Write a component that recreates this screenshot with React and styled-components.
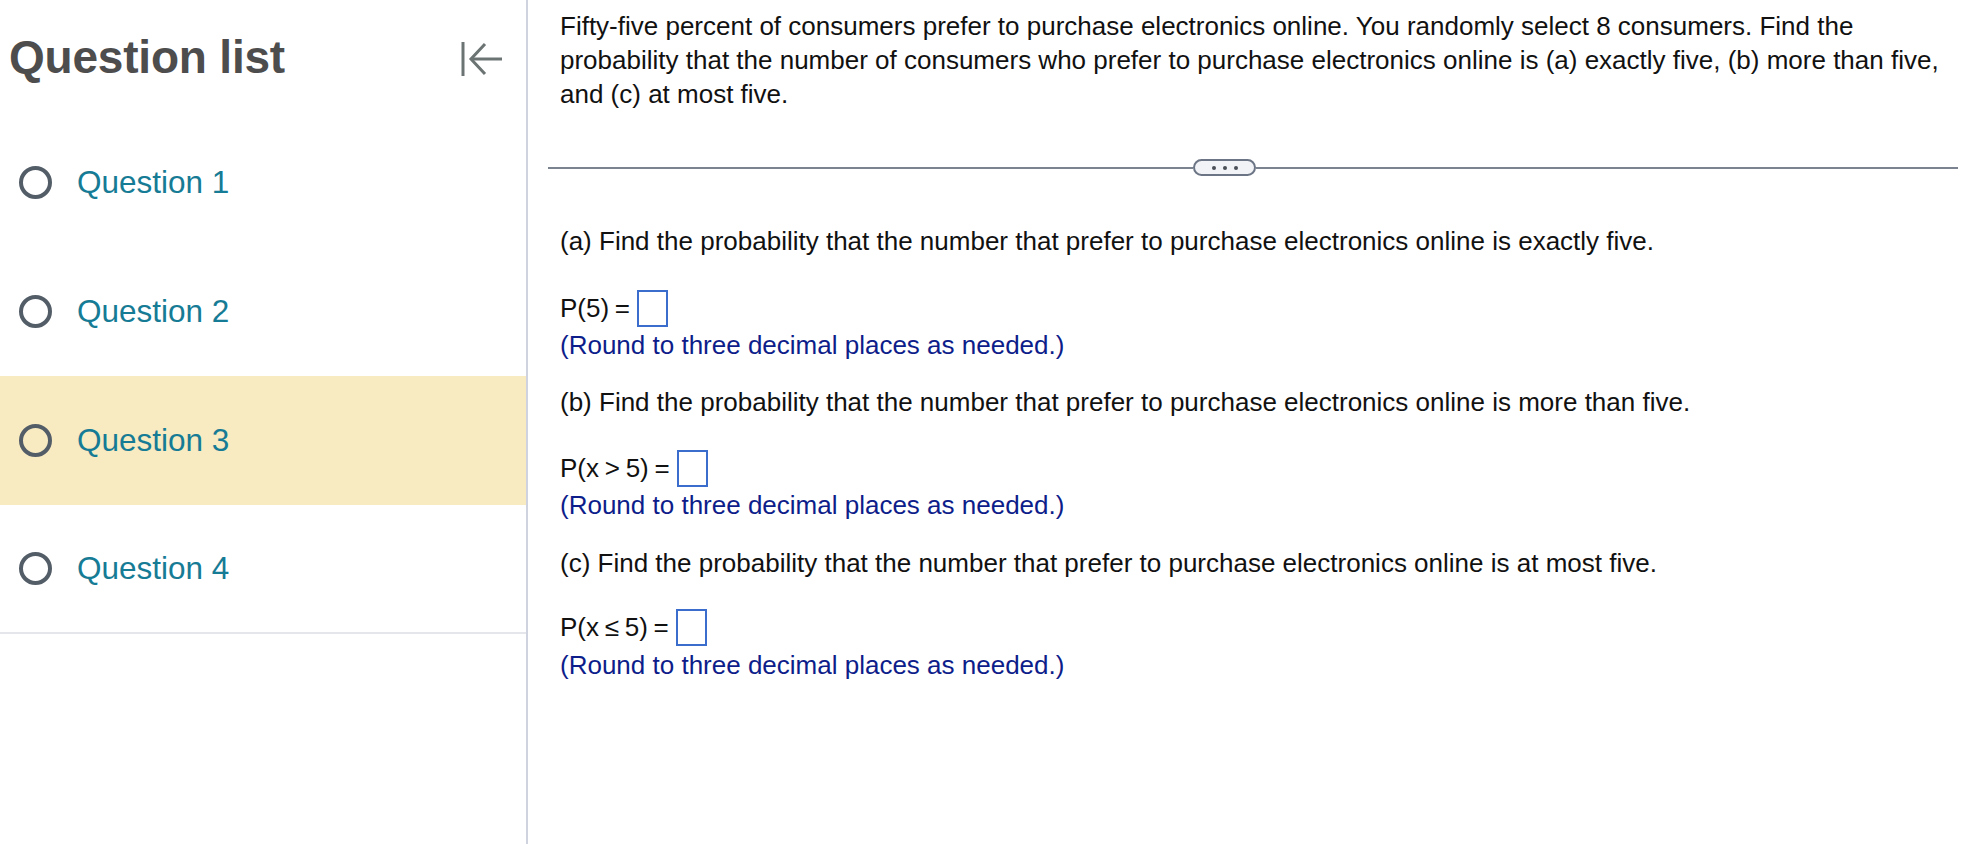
import React from "react";
import styled, { createGlobalStyle } from "styled-components";

const Global = createGlobalStyle`
  html, body { margin: 0; padding: 0; background: #ffffff; }
  body { font-family: "Liberation Sans", Arial, Helvetica, sans-serif; }
  * { box-sizing: border-box; }
`;

const Page = styled.div`
  display: flex;
  width: 1974px;
  height: 844px;
  overflow: hidden;
  background: #fff;
`;

const Sidebar = styled.aside`
  width: 528px;
  flex: none;
  height: 100%;
  border-right: 2px solid #cfd3df;
  display: flex;
  flex-direction: column;
`;

const SideHeader = styled.div`
  height: 118px;
  flex: none;
  display: flex;
  align-items: center;
  justify-content: space-between;
  padding: 0 22px 0 9px;
`;

const Title = styled.h1`
  margin: 0 0 4px 0;
  font-size: 46px;
  font-weight: 700;
  color: #4d4d4d;
  letter-spacing: -0.2px;
`;

const CollapseButton = styled.button`
  border: 0;
  background: none;
  padding: 0;
  width: 44px;
  height: 40px;
  display: flex;
  align-items: center;
  justify-content: center;
  cursor: pointer;
`;

const QuestionRow = styled.div`
  height: 129px;
  display: flex;
  align-items: center;
  gap: 25px;
  padding-left: 19px;
  background: ${(p) => (p.$active ? "#f8eac1" : "transparent")};
  border-bottom: ${(p) => (p.$last ? "2px solid #e4e6ec" : "0")};
  flex: none;
`;

const Radio = styled.span`
  width: 33px;
  height: 33px;
  border-radius: 50%;
  border: 4px solid #535d67;
  flex: none;
`;

const QuestionLabel = styled.span`
  font-size: 31.5px;
  color: #167b95;
`;

const Main = styled.main`
  flex: 1;
  padding: 0 16px 0 20px;
  color: #111;
  font-size: 26px;
`;

const Block = styled.div`
  padding-left: 12px;
  line-height: 34px;
  margin-top: ${(p) => p.$mt || 0}px;
`;

const Divider = styled.div`
  display: grid;
  grid-template-columns: 645px 63px 1fr;
  align-items: center;
  height: 17px;
  margin-top: 48px;
`;

const Rule = styled.div`
  height: 2px;
  background: #7b8290;
`;

const Pill = styled.button`
  height: 17px;
  border: 2px solid #6b7585;
  border-radius: 9px;
  background: #f2f3f6;
  display: flex;
  align-items: center;
  justify-content: center;
  gap: 7px;
  padding: 0;
`;

const Dot = styled.span`
  width: 4px;
  height: 4px;
  border-radius: 50%;
  background: #4a4f58;
`;

const AnswerRow = styled.div`
  display: flex;
  align-items: center;
  height: 38px;
  padding-left: 12px;
  word-spacing: -1.5px;
  margin-top: ${(p) => p.$mt || 0}px;
`;

const AnswerBox = styled.span`
  width: 31px;
  height: 37px;
  border: 2px solid #3b6dcc;
  margin-left: 7px;
  display: inline-block;
`;

const Hint = styled(Block)`
  color: #0d1d8a;
`;

function CollapseIcon() {
  return (
    <svg width="44" height="40" viewBox="0 0 44 40" fill="none">
      <line x1="3" y1="3" x2="3" y2="37" stroke="#6b7373" strokeWidth="3" />
      <line x1="11" y1="20" x2="42" y2="20" stroke="#6b7373" strokeWidth="3" />
      <polyline points="25,5 11,20 25,35" stroke="#6b7373" strokeWidth="3" fill="none" />
    </svg>
  );
}

const questions = ["Question 1", "Question 2", "Question 3", "Question 4"];

export default function App() {
  return (
    <>
      <Global />
      <Page>
        <Sidebar>
          <SideHeader>
            <Title>Question list</Title>
            <CollapseButton aria-label="Collapse question list">
              <CollapseIcon />
            </CollapseButton>
          </SideHeader>
          {questions.map((q, i) => (
            <QuestionRow key={q} $active={i === 2} $last={i === questions.length - 1}>
              <Radio />
              <QuestionLabel>{q}</QuestionLabel>
            </QuestionRow>
          ))}
        </Sidebar>
        <Main>
          <Block $mt={9}>
            Fifty-five percent of consumers prefer to purchase electronics online. You randomly select 8 consumers. Find the
            <br />
            probability that the number of consumers who prefer to purchase electronics online is (a) exactly five, (b) more than five,
            <br />
            and (c) at most five.
          </Block>
          <Divider>
            <Rule />
            <Pill aria-label="more">
              <Dot />
              <Dot />
              <Dot />
            </Pill>
            <Rule />
          </Divider>

          <Block $mt={48}>
            (a) Find the probability that the number that prefer to purchase electronics online is exactly five.
          </Block>
          <AnswerRow $mt={31}>
            P(5) =<AnswerBox />
          </AnswerRow>
          <Hint $mt={1}>(Round to three decimal places as needed.)</Hint>

          <Block $mt={23}>
            (b) Find the probability that the number that prefer to purchase electronics online is more than five.
          </Block>
          <AnswerRow $mt={30}>
            P(x &gt; 5) =<AnswerBox />
          </AnswerRow>
          <Hint $mt={1}>(Round to three decimal places as needed.)</Hint>

          <Block $mt={24}>
            (c) Find the probability that the number that prefer to purchase electronics online is at most five.
          </Block>
          <AnswerRow $mt={28}>
            P(x ≤ 5) =<AnswerBox />
          </AnswerRow>
          <Hint $mt={2}>(Round to three decimal places as needed.)</Hint>
        </Main>
      </Page>
    </>
  );
}
